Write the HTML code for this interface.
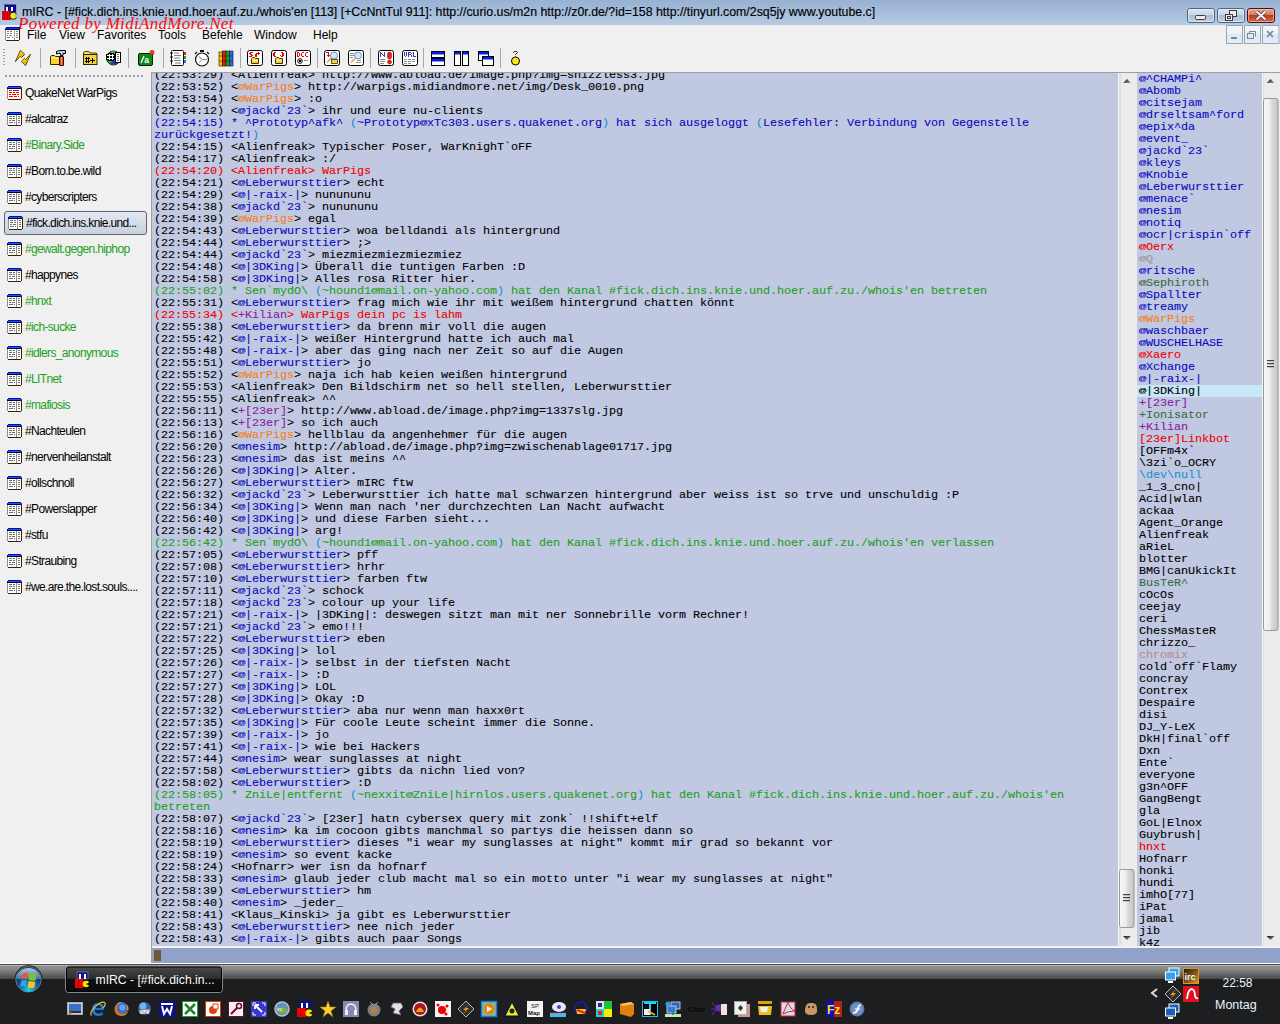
<!DOCTYPE html>
<html><head><meta charset="utf-8">
<style>
*{box-sizing:border-box}
html,body{margin:0;padding:0}
body{width:1280px;height:1024px;position:relative;overflow:hidden;background:#f0f0f0;font-family:"Liberation Sans",sans-serif}
.abs{position:absolute}
#title{left:0;top:0;width:1280px;height:25px;background:linear-gradient(#98b1d2,#b5cbe4)}
#ttext{left:22px;top:5px;font-size:12.33px;color:#000;-webkit-text-stroke-width:0.15px;white-space:nowrap;letter-spacing:0px}
#powered{left:18px;top:14px;font-family:"Liberation Serif",serif;font-style:italic;font-size:17px;color:#ff0808;white-space:nowrap;letter-spacing:0.3px}
.wb{position:absolute;top:8px;height:15px;border:1px solid #4a5a70;border-radius:3px;background:linear-gradient(#d8e6f4 0%,#c4d6ea 45%,#a8c0dc 50%,#b8d0ea 100%)}
#menubar{left:0;top:25px;width:1280px;height:19px}
.menu{position:absolute;top:28px;font-size:12px;color:#000}
.mdi{position:absolute;top:25px;width:17px;height:19px;border:1px solid #98a8b8;background:linear-gradient(#f4f8fc,#dce8f4)}
.tb{position:absolute;top:50px;width:16px;height:16px}
.sep{position:absolute;top:48px;width:1px;height:19px;background:#a8a8a8;border-right:1px solid #fff}
#grip{left:3px;top:49px;width:2px;height:18px;background:repeating-linear-gradient(#999 0 2px,transparent 2px 4px)}
#tgrip{left:5px;top:75px;width:139px;height:2px;background:repeating-linear-gradient(90deg,#a0a0a0 0 2px,transparent 2px 4px)}
.titem{position:absolute;left:7px;height:16px;font-size:12px;letter-spacing:-0.65px;white-space:nowrap;line-height:16px}
.titem svg{position:absolute;left:0;top:0}
.titem span{position:absolute;left:18px;top:-1px}
.tsel{position:absolute;left:4px;width:143px;height:24px;border:1px solid #5c6470;border-radius:3px;background:linear-gradient(#e2e8f0,#c8d2de)}
#chatborder{left:151px;top:72px;width:1129px;height:1px;background:#a0a0a0}
#chatleft{left:151px;top:72px;width:1px;height:891px;background:#a0a0a0}
#chat{left:152px;top:73px;width:966px;height:873px;background:#c1c9e2;overflow:hidden}
#chattext{position:absolute;left:2px;top:-4px;font-family:"Liberation Mono",monospace;font-size:11.8px;letter-spacing:-0.08px;-webkit-text-stroke-width:0.1px;line-height:12px;color:#000}
#chattext div,#nicktext div{white-space:pre;height:12px}
.at{display:inline-block;width:7px;font-weight:normal;text-align:center;transform:scale(1.1,0.66);transform-origin:50% 43%}
#sb1{left:1118px;top:73px;width:19px;height:873px;background:linear-gradient(90deg,#f4f4f4 0,#f4f4f4 1px,#dcdcdc 1px,#ececec 5px,#ececec 100%)}
#nick{left:1137px;top:73px;width:125px;height:873px;background:#c1c9e2;overflow:hidden}
#nicktext{position:absolute;left:2px;top:0px;font-family:"Liberation Mono",monospace;font-size:11.8px;letter-spacing:-0.08px;-webkit-text-stroke-width:0.1px;line-height:12px}
#nicktext .sel{background:#c8e8f8;margin-left:-2px;padding-left:2px;width:125px}
#sb2{left:1262px;top:73px;width:18px;height:873px;background:linear-gradient(90deg,#f4f4f4 0,#e8e8e8 3px,#ececec 100%)}
#inputline{left:152px;top:946px;width:1128px;height:2px;background:#f4f2ee}
#input{left:152px;top:948px;width:1128px;height:15px;background:#91a1ca}
#cursor{left:154px;top:950px;width:7px;height:11px;background:#6e5a34}
#taskbar{left:0;top:963px;width:1280px;height:61px;background:linear-gradient(#ffffff 0,#ffffff 1px,#3c3c3c 1px,#3c3c3c 2px,#a8a8a8 2px,#7c7c7c 15px,#1c1d20 16px,#1c1d20 100%)}
</style></head><body>
<div id="title" class="abs"></div>
<div id="ttext" class="abs">mIRC - [#fick.dich.ins.knie.und.hoer.auf.zu./whois'en [113] [+CcNntTul 911]: http://curio.us/m2n http://z0r.de/?id=158 http://tinyurl.com/2sq5jy www.youtube.c]</div>
<div id="powered" class="abs">Powered by MidiAndMore.Net</div>
<svg class="abs" style="left:0;top:0" width="30" height="44" shape-rendering="crispEdges">
<rect x="4" y="4" width="12" height="8" fill="#0a0a98" stroke="#9a9080" stroke-width="0.6"/>
<rect x="6" y="7" width="2" height="4" fill="#fff"/><rect x="11" y="7" width="2" height="4" fill="#fff"/>
<rect x="2" y="11" width="9" height="9" fill="#f00000"/>
<rect x="4" y="13" width="1" height="6" fill="#b00000"/><rect x="7" y="13" width="1" height="6" fill="#b00000"/>
<g shape-rendering="geometricPrecision"><circle cx="13.3" cy="15.8" r="3.6" fill="#f8f000" stroke="#101010" stroke-width="1"/><path d="M13.3,15.8 L17.5,13.5 L17.5,18 Z" fill="#a8bcd8"/></g>
<!-- menu icon -->
<rect x="6" y="27" width="14" height="1" fill="#0000f0"/><rect x="5" y="28" width="15" height="1" fill="#1840c0"/><rect x="5" y="29" width="15" height="1" fill="#000040"/>
<rect x="5" y="30" width="1" height="10" fill="#909090"/><rect x="19" y="28" width="1" height="12" fill="#402000"/><rect x="6" y="40" width="13" height="1" fill="#402000"/>
<rect x="6" y="30" width="13" height="10" fill="#fff"/><rect x="14" y="30" width="1" height="10" fill="#a0a0a0"/>
<g fill="#808080"><rect x="7" y="31" width="2" height="1"/><rect x="10" y="31" width="2" height="1"/><rect x="16" y="31" width="2" height="1"/><rect x="7" y="33" width="2" height="1"/><rect x="10" y="33" width="2" height="1"/><rect x="16" y="33" width="2" height="1"/><rect x="7" y="35" width="1" height="1"/><rect x="9" y="35" width="3" height="1"/><rect x="16" y="35" width="2" height="1"/><rect x="7" y="37" width="3" height="1"/><rect x="12" y="37" width="1" height="1"/><rect x="16" y="37" width="2" height="1"/></g>
</svg>
<svg class="abs" style="left:1185px;top:6px" width="95" height="40">
<defs>
<linearGradient id="wbg" x1="0" y1="0" x2="0" y2="1"><stop offset="0" stop-color="#dbe7f4"/><stop offset="0.45" stop-color="#c6d6e8"/><stop offset="0.5" stop-color="#a8bfd8"/><stop offset="1" stop-color="#bcd2ea"/></linearGradient>
<linearGradient id="wbc" x1="0" y1="0" x2="0" y2="1"><stop offset="0" stop-color="#eca898"/><stop offset="0.45" stop-color="#dc7a62"/><stop offset="0.5" stop-color="#c23a18"/><stop offset="1" stop-color="#da6a48"/></linearGradient>
<linearGradient id="mdg" x1="0" y1="0" x2="0" y2="1"><stop offset="0" stop-color="#f6f9fc"/><stop offset="0.5" stop-color="#e8f0f8"/><stop offset="0.5" stop-color="#dce8f4"/><stop offset="1" stop-color="#e4eef8"/></linearGradient>
</defs>
<rect x="2.5" y="2.5" width="27" height="14" rx="2.5" fill="url(#wbg)" stroke="#566478"/>
<rect x="3.5" y="3.5" width="25" height="12" rx="1.5" fill="none" stroke="#e8f0f8" stroke-opacity="0.7"/>
<rect x="10.5" y="9.5" width="10" height="4" rx="1" fill="#f0ece8" stroke="#3a3a48"/>
<rect x="32.5" y="2.5" width="27" height="14" rx="2.5" fill="url(#wbg)" stroke="#566478"/>
<rect x="33.5" y="3.5" width="25" height="12" rx="1.5" fill="none" stroke="#e8f0f8" stroke-opacity="0.7"/>
<rect x="44.5" y="4.5" width="7" height="6" fill="#f0ece8" stroke="#3a3a48"/>
<rect x="40.5" y="8.5" width="7" height="6" fill="#f0ece8" stroke="#3a3a48"/>
<rect x="42.5" y="10.5" width="3" height="2" fill="none" stroke="#3a3a48"/>
<rect x="62.5" y="2.5" width="27" height="14" rx="2.5" fill="url(#wbc)" stroke="#4a1010"/>
<rect x="63.5" y="3.5" width="25" height="12" rx="1.5" fill="none" stroke="#f8d0c8" stroke-opacity="0.6"/>
<path d="M71.5,5.5 L80.5,13.5 M80.5,5.5 L71.5,13.5" stroke="#3a3a48" stroke-width="3.4"/>
<path d="M71.5,5.5 L80.5,13.5 M80.5,5.5 L71.5,13.5" stroke="#f4f4f8" stroke-width="2"/>
<!-- mdi -->
<rect x="41.5" y="19.5" width="16" height="18" fill="url(#mdg)" stroke="#98a6b4"/>
<rect x="46" y="31" width="6" height="2" fill="#788898"/>
<rect x="59.5" y="19.5" width="16" height="18" fill="url(#mdg)" stroke="#98a6b4"/>
<path d="M64.5,25.5 h6 v5 M64.5,27.5 v-2" stroke="#788898" fill="none"/><rect x="62.5" y="27.5" width="6" height="5" fill="none" stroke="#788898"/>
<rect x="77.5" y="19.5" width="16.5" height="18" fill="url(#mdg)" stroke="#98a6b4"/>
<path d="M82,25 L88,31 M88,25 L82,31" stroke="#788898" stroke-width="1.6"/>
</svg>


<div class="menu" style="left:27px">File</div>
<div class="menu" style="left:59px">View</div>
<div class="menu" style="left:97px">Favorites</div>
<div class="menu" style="left:158px">Tools</div>
<div class="menu" style="left:202px">Befehle</div>
<div class="menu" style="left:254px">Window</div>
<div class="menu" style="left:313px">Help</div>

<svg class="abs" style="left:0;top:44px" width="530" height="28" viewBox="0 0 530 28" shape-rendering="crispEdges">
<!-- grip -->
<g fill="#a0a0a0"><rect x="3" y="5" width="2" height="1"/><rect x="3" y="8" width="2" height="1"/><rect x="3" y="11" width="2" height="1"/><rect x="3" y="14" width="2" height="1"/><rect x="3" y="17" width="2" height="1"/><rect x="3" y="20" width="2" height="1"/></g>
<g fill="#a8a8a8"><rect x="40" y="4" width="1" height="20"/><rect x="75" y="4" width="1" height="20"/><rect x="128" y="4" width="1" height="20"/><rect x="163" y="4" width="1" height="20"/><rect x="240" y="4" width="1" height="20"/><rect x="317" y="4" width="1" height="20"/><rect x="370" y="4" width="1" height="20"/><rect x="423" y="4" width="1" height="20"/><rect x="500" y="4" width="1" height="20"/></g>
<g shape-rendering="geometricPrecision">
<!-- 1 connect -->
<g transform="translate(15,6)"><defs><linearGradient id="bolt" x1="0" y1="0" x2="1" y2="1"><stop offset="0" stop-color="#fff870"/><stop offset="0.5" stop-color="#f0c800"/><stop offset="1" stop-color="#b08000"/></linearGradient></defs><path d="M0.3,11.7 L5.4,0.3 L9.7,4.3 L6.6,7.5 L5.4,6.3 Z" fill="url(#bolt)" stroke="#584000" stroke-width="0.9" stroke-linejoin="round"/><path d="M15.6,4 L10.6,15.6 L6.3,11.4 L9.5,8.3 L10.6,9.6 Z" fill="url(#bolt)" stroke="#584000" stroke-width="0.9" stroke-linejoin="round"/></g>
<!-- 2 options -->
<g transform="translate(50,6)"><path d="M0.5,6.5 L1.5,5.5 L4.5,5.5 L5.5,6.5 L10.5,6.5 L10.5,14.5 L0.5,14.5 Z" fill="#f4d430" stroke="#302800" stroke-width="1"/><rect x="1" y="7.5" width="9" height="1.2" fill="#f8f0a0"/><rect x="9.5" y="6.5" width="4" height="9" rx="0.5" fill="#e85010" stroke="#200000" stroke-width="1"/><rect x="11" y="7" width="1" height="8" fill="#f89050"/><path d="M6.5,1.5 Q8,0.5 11,0.5 L15.5,0.5 L15.5,3.5 L13,3.5 L13,5.5 L10.5,5.5 L10.5,3.5 Q8,3 6.5,4 Z" fill="#b8d0e8" stroke="#000" stroke-width="1" stroke-linejoin="round"/></g>
<!-- 3 channels folder -->
<g transform="translate(82,6)"><path d="M1.5,4.5 L1.5,2.5 L3,1.5 L7,1.5 L8,3 L14.5,3 L14.5,4.5" fill="#f8e070" stroke="#504000" stroke-width="1"/><rect x="1.5" y="4.5" width="13.5" height="10" fill="#f4d430" stroke="#302800" stroke-width="1"/><g fill="#000" shape-rendering="crispEdges"><rect x="4" y="7" width="1" height="6"/><rect x="6" y="7" width="1" height="6"/><rect x="3" y="8" width="5" height="1"/><rect x="3" y="11" width="5" height="1"/><rect x="10" y="8" width="1" height="5"/><rect x="8" y="10" width="5" height="1"/></g></g>
<!-- 4 globe -->
<g transform="translate(106,6)"><circle cx="7.5" cy="8" r="7" fill="#38a838" stroke="#182818" stroke-width="1"/><path d="M4,14 L7.5,10 L11,14 Z" fill="#1838d8"/><path d="M5,1.5 L7.5,4 L10,1.5Z" fill="#60c060"/>
<g shape-rendering="crispEdges"><rect x="1" y="3" width="8" height="8" fill="#000" opacity="0"/><g fill="#000"><rect x="2" y="3" width="3" height="8"/><rect x="5" y="3" width="3" height="8"/><rect x="0" y="4" width="9" height="3"/><rect x="0" y="7" width="9" height="3"/></g><g fill="#fff"><rect x="3" y="4" width="1" height="6"/><rect x="6" y="4" width="1" height="6"/><rect x="1" y="5" width="7" height="1"/><rect x="1" y="8" width="7" height="1"/></g>
<rect x="9" y="2" width="6" height="11" fill="#000"/><rect x="10" y="3" width="4" height="9" fill="#fff"/><g fill="#808080"><rect x="11" y="4" width="2" height="1"/><rect x="11" y="6" width="2" height="1"/><rect x="11" y="8" width="2" height="1"/><rect x="11" y="10" width="2" height="1"/></g></g></g>
<!-- 5 /a -->
<g transform="translate(138,6)"><rect x="0.5" y="3.5" width="14" height="12" rx="1.5" fill="#0c8a1c" stroke="#002000" stroke-width="1"/><path d="M3,13 L6,6" stroke="#fff" stroke-width="1.3"/><text x="6.3" y="13" font-family="Liberation Sans" font-weight="bold" font-size="8.5" fill="#fff">a</text><rect x="12" y="0.5" width="4" height="4" rx="1" fill="#f04010" stroke="#903000" stroke-width="0.5"/></g>
<!-- 6 address book -->
<g transform="translate(170,6)"><rect x="1.5" y="0.5" width="12" height="15" rx="1" fill="#fff" stroke="#101010" stroke-width="1"/><path d="M4,3h5M4,5.5h7M4,8h6M4,10.5h7M5,13h6" stroke="#707070" stroke-width="0.9"/><rect x="14" y="2" width="2" height="3" fill="#e02020"/><rect x="14" y="6" width="2" height="3" fill="#20a020"/><rect x="14" y="10" width="2" height="3" fill="#2080e0"/><path d="M0,3h3M0,7h3M0,11h3" stroke="#101010" stroke-width="1"/></g>
<!-- 7 timer -->
<g transform="translate(194,6)"><circle cx="8" cy="9.5" r="6.5" fill="#fff" stroke="#101010" stroke-width="1.2"/><rect x="6" y="0" width="4" height="2" fill="#101010"/><path d="M1,4 L3,2 M15,4 L13,2" stroke="#101010" stroke-width="1.2"/><path d="M8,9.5 L5,6.5" stroke="#e02020" stroke-width="1"/><path d="M8,9.5 L13,9.5 M8,9.5 L5,13" stroke="#909090" stroke-width="1"/></g>
<!-- 8 colors -->
<g transform="translate(218,6)"><rect x="1" y="2" width="3.5" height="14" fill="#f0c000" stroke="#302000" stroke-width="0.6"/><rect x="4.5" y="1" width="3.5" height="15" fill="#e02010" stroke="#300000" stroke-width="0.6"/><rect x="8" y="1" width="3.5" height="15" fill="#20a020" stroke="#003000" stroke-width="0.6"/><rect x="11.5" y="1" width="3.5" height="15" fill="#2070e0" stroke="#001040" stroke-width="0.6"/><path d="M1,6h14M1,11h14" stroke="#302000" stroke-width="0.6"/></g>
<!-- 9 send -->
<g transform="translate(247,6)"><rect x="0.5" y="0.5" width="15" height="15" rx="2" fill="#fff" stroke="#000" stroke-width="1"/><g shape-rendering="crispEdges" fill="#f00000"><rect x="3" y="2" width="3" height="1"/><rect x="2" y="3" width="2" height="1"/><rect x="3" y="4" width="2" height="1"/><rect x="4" y="5" width="2" height="1"/><rect x="2" y="6" width="3" height="1"/><rect x="8" y="4" width="2" height="3"/><rect x="9" y="3" width="3" height="1"/><rect x="11" y="2" width="1" height="3"/><rect x="12" y="3" width="1" height="1"/></g><path d="M4.5,9.5 L4.5,8.5 L5.5,7.5 L7.5,7.5 L8.5,8.5 L11.5,8.5 L11.5,13.5 L4.5,13.5 Z" fill="#f4d430" stroke="#403000" stroke-width="1"/><rect x="5" y="10" width="6" height="1" fill="#f8f0a0"/></g>
<!-- 10 chat -->
<g transform="translate(271,6)"><rect x="0.5" y="0.5" width="15" height="15" rx="2" fill="#fff" stroke="#000" stroke-width="1"/><g shape-rendering="crispEdges" fill="#f00000"><rect x="3" y="2" width="2" height="1"/><rect x="2" y="3" width="2" height="3"/><rect x="3" y="6" width="2" height="1"/><rect x="10" y="2" width="2" height="1"/><rect x="11" y="3" width="2" height="3"/><rect x="10" y="6" width="2" height="1"/><rect x="9" y="5" width="1" height="1"/></g><path d="M4.5,9.5 L4.5,8.5 L5.5,7.5 L7.5,7.5 L8.5,8.5 L11.5,8.5 L11.5,13.5 L4.5,13.5 Z" fill="#f4d430" stroke="#403000" stroke-width="1"/><rect x="5" y="10" width="6" height="1" fill="#f8f0a0"/></g>
<!-- 11 DCC -->
<g transform="translate(295,6)"><rect x="0.5" y="0.5" width="15" height="15" rx="2" fill="#fff" stroke="#000" stroke-width="1"/><g shape-rendering="crispEdges" fill="#f00000"><rect x="2" y="2" width="2" height="1"/><rect x="2" y="3" width="1" height="3"/><rect x="4" y="3" width="1" height="3"/><rect x="2" y="6" width="2" height="1"/><rect x="7" y="2" width="2" height="1"/><rect x="6" y="3" width="1" height="3"/><rect x="7" y="6" width="2" height="1"/><rect x="11" y="2" width="2" height="1"/><rect x="10" y="3" width="1" height="3"/><rect x="11" y="6" width="2" height="1"/></g><circle cx="5" cy="11" r="2.3" fill="#fff" stroke="#000" stroke-width="1"/><rect x="4" y="10" width="2" height="2" fill="#000" shape-rendering="crispEdges"/><rect x="9" y="10" width="4" height="1" fill="#909090" shape-rendering="crispEdges"/></g>
<!-- 12 log w/ arrow -->
<g transform="translate(324,6)"><rect x="0.5" y="0.5" width="15" height="15" rx="2" fill="#fff" stroke="#000" stroke-width="1"/><circle cx="10" cy="5.5" r="3.5" fill="#d0e8ff" stroke="#5088c0" stroke-width="0.9"/><path d="M7.5,8 L3,12.5" stroke="#f0a060" stroke-width="1.6"/><rect x="7.5" y="9.5" width="6" height="4" fill="#f4d430" stroke="#403000" stroke-width="0.8"/><g shape-rendering="crispEdges" fill="#f00000"><rect x="2" y="2" width="3" height="1"/><rect x="4" y="3" width="1" height="3"/><rect x="3" y="5" width="3" height="1"/><rect x="4" y="6" width="1" height="1"/></g></g>
<!-- 13 log search -->
<g transform="translate(348,6)"><rect x="0.5" y="0.5" width="15" height="15" rx="2" fill="#fff" stroke="#000" stroke-width="1"/><g shape-rendering="crispEdges" fill="#909090"><rect x="2" y="3" width="4" height="1"/><rect x="2" y="5" width="4" height="1"/><rect x="2" y="7" width="3" height="1"/><rect x="9" y="10" width="4" height="1"/><rect x="8" y="12" width="5" height="1"/></g><circle cx="10" cy="5.5" r="3.5" fill="#d0e8ff" stroke="#5088c0" stroke-width="0.9"/><path d="M7.5,8 L3,12.5" stroke="#f0a060" stroke-width="1.6"/></g>
<!-- 14 N! -->
<g transform="translate(378,6)"><rect x="0.5" y="0.5" width="15" height="15" rx="2" fill="#fff" stroke="#000" stroke-width="1"/><g shape-rendering="crispEdges"><g fill="#3838b8"><rect x="2" y="2" width="1" height="5"/><rect x="6" y="2" width="1" height="5"/><rect x="3" y="3" width="1" height="1"/><rect x="4" y="4" width="1" height="1"/><rect x="5" y="5" width="1" height="1"/></g><g fill="#909090"><rect x="2" y="9" width="5" height="1"/><rect x="2" y="11" width="5" height="1"/><rect x="2" y="13" width="4" height="1"/></g></g><rect x="9.5" y="2" width="4" height="7" rx="2" fill="#f02010" stroke="#a01000" stroke-width="0.6"/><circle cx="11.5" cy="12" r="2" fill="#f02010" stroke="#a01000" stroke-width="0.6"/></g>
<!-- 15 URL -->
<g transform="translate(402,6)"><rect x="0.5" y="0.5" width="15" height="15" rx="2" fill="#fff" stroke="#000" stroke-width="1"/><g shape-rendering="crispEdges"><g fill="#3838b8"><rect x="2" y="2" width="1" height="4"/><rect x="4" y="2" width="1" height="4"/><rect x="3" y="6" width="1" height="1"/><rect x="6" y="2" width="1" height="5"/><rect x="7" y="2" width="2" height="1"/><rect x="9" y="3" width="1" height="1"/><rect x="7" y="4" width="2" height="1"/><rect x="9" y="5" width="1" height="2"/><rect x="11" y="2" width="1" height="5"/><rect x="12" y="6" width="2" height="1"/></g><g fill="#909090"><rect x="2" y="9" width="3" height="1"/><rect x="6" y="9" width="3" height="1"/><rect x="10" y="9" width="3" height="1"/><rect x="2" y="11" width="3" height="1"/><rect x="6" y="11" width="3" height="1"/><rect x="10" y="11" width="3" height="1"/><rect x="2" y="13" width="3" height="1"/><rect x="6" y="13" width="3" height="1"/></g></g></g>
<!-- 16 tile h -->
<g transform="translate(430,6)" shape-rendering="crispEdges"><rect x="1" y="1" width="14" height="7" fill="#000"/><rect x="2" y="2" width="12" height="5" fill="#fff"/><rect x="2" y="2" width="12" height="2" fill="#0020f0"/><rect x="2" y="4" width="12" height="1" fill="#8090f0"/><rect x="1" y="8" width="14" height="8" fill="#000"/><rect x="2" y="9" width="12" height="6" fill="#fff"/><rect x="2" y="9" width="12" height="2" fill="#0020f0"/><rect x="2" y="11" width="12" height="1" fill="#8090f0"/></g>
<!-- 17 tile v -->
<g transform="translate(454,6)" shape-rendering="crispEdges"><rect x="0" y="1" width="7" height="15" fill="#000"/><rect x="1" y="2" width="5" height="13" fill="#fff"/><rect x="1" y="2" width="5" height="2" fill="#0020f0"/><rect x="1" y="4" width="5" height="1" fill="#8090f0"/><rect x="8" y="1" width="7" height="15" fill="#000"/><rect x="9" y="2" width="5" height="13" fill="#fff"/><rect x="9" y="2" width="5" height="2" fill="#0020f0"/><rect x="9" y="4" width="5" height="1" fill="#8090f0"/></g>
<!-- 18 cascade -->
<g transform="translate(478,6)" shape-rendering="crispEdges"><rect x="0" y="1" width="11" height="10" fill="#000"/><rect x="1" y="2" width="9" height="8" fill="#fff"/><rect x="1" y="2" width="9" height="2" fill="#0020f0"/><rect x="1" y="4" width="9" height="1" fill="#8090f0"/><rect x="4" y="6" width="12" height="10" fill="#000"/><rect x="5" y="7" width="10" height="8" fill="#fff"/><rect x="5" y="7" width="10" height="2" fill="#0020f0"/><rect x="5" y="9" width="10" height="1" fill="#8090f0"/></g>
<!-- 19 help -->
<g transform="translate(510,6)"><circle cx="5.5" cy="11" r="4" fill="#f8e818" stroke="#000" stroke-width="1"/><g shape-rendering="crispEdges" fill="#404000"><rect x="4" y="1" width="3" height="1"/><rect x="3" y="2" width="1" height="1"/><rect x="7" y="2" width="1" height="1"/><rect x="6" y="3" width="1" height="1"/><rect x="5" y="4" width="1" height="1"/><rect x="5" y="6" width="1" height="1"/></g></g>
</g>
</svg>


<div id="tgrip" class="abs"></div>
<div class="titem" style="top:86px;color:#000000"><svg width="15" height="14" style="left:0px" shape-rendering="crispEdges"><rect x="1" y="0" width="13" height="2" fill="#0000f0"/><rect x="0" y="1" width="1" height="1" fill="#0000f0"/><rect x="1" y="1" width="13" height="1" fill="#2060c0"/><rect x="0" y="2" width="15" height="1" fill="#000030"/><rect x="0" y="3" width="1" height="10" fill="#909090"/><rect x="14" y="1" width="1" height="12" fill="#402000"/><rect x="1" y="13" width="13" height="1" fill="#402000"/><rect x="1" y="3" width="13" height="10" fill="#ffffff"/><g fill="#ff0000"><rect x="2" y="4" width="3" height="1"/><rect x="6" y="4" width="6" height="1"/><rect x="2" y="6" width="3" height="1"/><rect x="6" y="6" width="2" height="1"/><rect x="9" y="6" width="3" height="1"/><rect x="2" y="8" width="2" height="1"/><rect x="5" y="8" width="4" height="1"/><rect x="10" y="8" width="2" height="1"/><rect x="2" y="10" width="4" height="1"/><rect x="7" y="10" width="3" height="1"/><rect x="11" y="10" width="1" height="1"/></g></svg><span style="left:18px">QuakeNet WarPigs</span></div>
<div class="titem" style="top:112px;color:#000000"><svg width="15" height="14" style="left:0px" shape-rendering="crispEdges"><rect x="1" y="0" width="13" height="2" fill="#0000f0"/><rect x="0" y="1" width="1" height="1" fill="#0000f0"/><rect x="1" y="1" width="13" height="1" fill="#2060c0"/><rect x="0" y="2" width="15" height="1" fill="#000030"/><rect x="0" y="3" width="1" height="10" fill="#909090"/><rect x="14" y="1" width="1" height="12" fill="#402000"/><rect x="1" y="13" width="13" height="1" fill="#402000"/><rect x="1" y="3" width="13" height="10" fill="#ffffff"/><rect x="9" y="3" width="1" height="10" fill="#909090"/><g fill="#707070"><rect x="2" y="4" width="3" height="1"/><rect x="6" y="4" width="2" height="1"/><rect x="2" y="6" width="3" height="1"/><rect x="6" y="6" width="2" height="1"/><rect x="2" y="8" width="2" height="1"/><rect x="5" y="8" width="3" height="1"/><rect x="2" y="10" width="4" height="1"/><rect x="7" y="10" width="1" height="1"/><rect x="11" y="4" width="2" height="1"/><rect x="11" y="6" width="2" height="1"/><rect x="11" y="8" width="2" height="1"/><rect x="11" y="10" width="2" height="1"/></g></svg><span style="left:18px">#alcatraz</span></div>
<div class="titem" style="top:138px;color:#22a01c"><svg width="15" height="14" style="left:0px" shape-rendering="crispEdges"><rect x="1" y="0" width="13" height="2" fill="#0000f0"/><rect x="0" y="1" width="1" height="1" fill="#0000f0"/><rect x="1" y="1" width="13" height="1" fill="#2060c0"/><rect x="0" y="2" width="15" height="1" fill="#000030"/><rect x="0" y="3" width="1" height="10" fill="#909090"/><rect x="14" y="1" width="1" height="12" fill="#402000"/><rect x="1" y="13" width="13" height="1" fill="#402000"/><rect x="1" y="3" width="13" height="10" fill="#ffffff"/><rect x="9" y="3" width="1" height="10" fill="#909090"/><g fill="#707070"><rect x="2" y="4" width="3" height="1"/><rect x="6" y="4" width="2" height="1"/><rect x="2" y="6" width="3" height="1"/><rect x="6" y="6" width="2" height="1"/><rect x="2" y="8" width="2" height="1"/><rect x="5" y="8" width="3" height="1"/><rect x="2" y="10" width="4" height="1"/><rect x="7" y="10" width="1" height="1"/><rect x="11" y="4" width="2" height="1"/><rect x="11" y="6" width="2" height="1"/><rect x="11" y="8" width="2" height="1"/><rect x="11" y="10" width="2" height="1"/></g></svg><span style="left:18px">#Binary.Side</span></div>
<div class="titem" style="top:164px;color:#000000"><svg width="15" height="14" style="left:0px" shape-rendering="crispEdges"><rect x="1" y="0" width="13" height="2" fill="#0000f0"/><rect x="0" y="1" width="1" height="1" fill="#0000f0"/><rect x="1" y="1" width="13" height="1" fill="#2060c0"/><rect x="0" y="2" width="15" height="1" fill="#000030"/><rect x="0" y="3" width="1" height="10" fill="#909090"/><rect x="14" y="1" width="1" height="12" fill="#402000"/><rect x="1" y="13" width="13" height="1" fill="#402000"/><rect x="1" y="3" width="13" height="10" fill="#ffffff"/><rect x="9" y="3" width="1" height="10" fill="#909090"/><g fill="#707070"><rect x="2" y="4" width="3" height="1"/><rect x="6" y="4" width="2" height="1"/><rect x="2" y="6" width="3" height="1"/><rect x="6" y="6" width="2" height="1"/><rect x="2" y="8" width="2" height="1"/><rect x="5" y="8" width="3" height="1"/><rect x="2" y="10" width="4" height="1"/><rect x="7" y="10" width="1" height="1"/><rect x="11" y="4" width="2" height="1"/><rect x="11" y="6" width="2" height="1"/><rect x="11" y="8" width="2" height="1"/><rect x="11" y="10" width="2" height="1"/></g></svg><span style="left:18px">#Born.to.be.wild</span></div>
<div class="titem" style="top:190px;color:#000000"><svg width="15" height="14" style="left:0px" shape-rendering="crispEdges"><rect x="1" y="0" width="13" height="2" fill="#0000f0"/><rect x="0" y="1" width="1" height="1" fill="#0000f0"/><rect x="1" y="1" width="13" height="1" fill="#2060c0"/><rect x="0" y="2" width="15" height="1" fill="#000030"/><rect x="0" y="3" width="1" height="10" fill="#909090"/><rect x="14" y="1" width="1" height="12" fill="#402000"/><rect x="1" y="13" width="13" height="1" fill="#402000"/><rect x="1" y="3" width="13" height="10" fill="#ffffff"/><rect x="9" y="3" width="1" height="10" fill="#909090"/><g fill="#707070"><rect x="2" y="4" width="3" height="1"/><rect x="6" y="4" width="2" height="1"/><rect x="2" y="6" width="3" height="1"/><rect x="6" y="6" width="2" height="1"/><rect x="2" y="8" width="2" height="1"/><rect x="5" y="8" width="3" height="1"/><rect x="2" y="10" width="4" height="1"/><rect x="7" y="10" width="1" height="1"/><rect x="11" y="4" width="2" height="1"/><rect x="11" y="6" width="2" height="1"/><rect x="11" y="8" width="2" height="1"/><rect x="11" y="10" width="2" height="1"/></g></svg><span style="left:18px">#cyberscripters</span></div>
<div class="tsel" style="top:211px"></div>
<div class="titem" style="top:216px;color:#000000"><svg width="15" height="14" style="left:1px" shape-rendering="crispEdges"><rect x="1" y="0" width="13" height="2" fill="#0000f0"/><rect x="0" y="1" width="1" height="1" fill="#0000f0"/><rect x="1" y="1" width="13" height="1" fill="#2060c0"/><rect x="0" y="2" width="15" height="1" fill="#000030"/><rect x="0" y="3" width="1" height="10" fill="#909090"/><rect x="14" y="1" width="1" height="12" fill="#402000"/><rect x="1" y="13" width="13" height="1" fill="#402000"/><rect x="1" y="3" width="13" height="10" fill="#ffffff"/><rect x="9" y="3" width="1" height="10" fill="#909090"/><g fill="#707070"><rect x="2" y="4" width="3" height="1"/><rect x="6" y="4" width="2" height="1"/><rect x="2" y="6" width="3" height="1"/><rect x="6" y="6" width="2" height="1"/><rect x="2" y="8" width="2" height="1"/><rect x="5" y="8" width="3" height="1"/><rect x="2" y="10" width="4" height="1"/><rect x="7" y="10" width="1" height="1"/><rect x="11" y="4" width="2" height="1"/><rect x="11" y="6" width="2" height="1"/><rect x="11" y="8" width="2" height="1"/><rect x="11" y="10" width="2" height="1"/></g></svg><span style="left:19px">#fick.dich.ins.knie.und...</span></div>
<div class="titem" style="top:242px;color:#22a01c"><svg width="15" height="14" style="left:0px" shape-rendering="crispEdges"><rect x="1" y="0" width="13" height="2" fill="#0000f0"/><rect x="0" y="1" width="1" height="1" fill="#0000f0"/><rect x="1" y="1" width="13" height="1" fill="#2060c0"/><rect x="0" y="2" width="15" height="1" fill="#000030"/><rect x="0" y="3" width="1" height="10" fill="#909090"/><rect x="14" y="1" width="1" height="12" fill="#402000"/><rect x="1" y="13" width="13" height="1" fill="#402000"/><rect x="1" y="3" width="13" height="10" fill="#ffffff"/><rect x="9" y="3" width="1" height="10" fill="#909090"/><g fill="#707070"><rect x="2" y="4" width="3" height="1"/><rect x="6" y="4" width="2" height="1"/><rect x="2" y="6" width="3" height="1"/><rect x="6" y="6" width="2" height="1"/><rect x="2" y="8" width="2" height="1"/><rect x="5" y="8" width="3" height="1"/><rect x="2" y="10" width="4" height="1"/><rect x="7" y="10" width="1" height="1"/><rect x="11" y="4" width="2" height="1"/><rect x="11" y="6" width="2" height="1"/><rect x="11" y="8" width="2" height="1"/><rect x="11" y="10" width="2" height="1"/></g></svg><span style="left:18px">#gewalt.gegen.hiphop</span></div>
<div class="titem" style="top:268px;color:#000000"><svg width="15" height="14" style="left:0px" shape-rendering="crispEdges"><rect x="1" y="0" width="13" height="2" fill="#0000f0"/><rect x="0" y="1" width="1" height="1" fill="#0000f0"/><rect x="1" y="1" width="13" height="1" fill="#2060c0"/><rect x="0" y="2" width="15" height="1" fill="#000030"/><rect x="0" y="3" width="1" height="10" fill="#909090"/><rect x="14" y="1" width="1" height="12" fill="#402000"/><rect x="1" y="13" width="13" height="1" fill="#402000"/><rect x="1" y="3" width="13" height="10" fill="#ffffff"/><rect x="9" y="3" width="1" height="10" fill="#909090"/><g fill="#707070"><rect x="2" y="4" width="3" height="1"/><rect x="6" y="4" width="2" height="1"/><rect x="2" y="6" width="3" height="1"/><rect x="6" y="6" width="2" height="1"/><rect x="2" y="8" width="2" height="1"/><rect x="5" y="8" width="3" height="1"/><rect x="2" y="10" width="4" height="1"/><rect x="7" y="10" width="1" height="1"/><rect x="11" y="4" width="2" height="1"/><rect x="11" y="6" width="2" height="1"/><rect x="11" y="8" width="2" height="1"/><rect x="11" y="10" width="2" height="1"/></g></svg><span style="left:18px">#happynes</span></div>
<div class="titem" style="top:294px;color:#22a01c"><svg width="15" height="14" style="left:0px" shape-rendering="crispEdges"><rect x="1" y="0" width="13" height="2" fill="#0000f0"/><rect x="0" y="1" width="1" height="1" fill="#0000f0"/><rect x="1" y="1" width="13" height="1" fill="#2060c0"/><rect x="0" y="2" width="15" height="1" fill="#000030"/><rect x="0" y="3" width="1" height="10" fill="#909090"/><rect x="14" y="1" width="1" height="12" fill="#402000"/><rect x="1" y="13" width="13" height="1" fill="#402000"/><rect x="1" y="3" width="13" height="10" fill="#ffffff"/><rect x="9" y="3" width="1" height="10" fill="#909090"/><g fill="#707070"><rect x="2" y="4" width="3" height="1"/><rect x="6" y="4" width="2" height="1"/><rect x="2" y="6" width="3" height="1"/><rect x="6" y="6" width="2" height="1"/><rect x="2" y="8" width="2" height="1"/><rect x="5" y="8" width="3" height="1"/><rect x="2" y="10" width="4" height="1"/><rect x="7" y="10" width="1" height="1"/><rect x="11" y="4" width="2" height="1"/><rect x="11" y="6" width="2" height="1"/><rect x="11" y="8" width="2" height="1"/><rect x="11" y="10" width="2" height="1"/></g></svg><span style="left:18px">#hnxt</span></div>
<div class="titem" style="top:320px;color:#22a01c"><svg width="15" height="14" style="left:0px" shape-rendering="crispEdges"><rect x="1" y="0" width="13" height="2" fill="#0000f0"/><rect x="0" y="1" width="1" height="1" fill="#0000f0"/><rect x="1" y="1" width="13" height="1" fill="#2060c0"/><rect x="0" y="2" width="15" height="1" fill="#000030"/><rect x="0" y="3" width="1" height="10" fill="#909090"/><rect x="14" y="1" width="1" height="12" fill="#402000"/><rect x="1" y="13" width="13" height="1" fill="#402000"/><rect x="1" y="3" width="13" height="10" fill="#ffffff"/><rect x="9" y="3" width="1" height="10" fill="#909090"/><g fill="#707070"><rect x="2" y="4" width="3" height="1"/><rect x="6" y="4" width="2" height="1"/><rect x="2" y="6" width="3" height="1"/><rect x="6" y="6" width="2" height="1"/><rect x="2" y="8" width="2" height="1"/><rect x="5" y="8" width="3" height="1"/><rect x="2" y="10" width="4" height="1"/><rect x="7" y="10" width="1" height="1"/><rect x="11" y="4" width="2" height="1"/><rect x="11" y="6" width="2" height="1"/><rect x="11" y="8" width="2" height="1"/><rect x="11" y="10" width="2" height="1"/></g></svg><span style="left:18px">#ich-sucke</span></div>
<div class="titem" style="top:346px;color:#22a01c"><svg width="15" height="14" style="left:0px" shape-rendering="crispEdges"><rect x="1" y="0" width="13" height="2" fill="#0000f0"/><rect x="0" y="1" width="1" height="1" fill="#0000f0"/><rect x="1" y="1" width="13" height="1" fill="#2060c0"/><rect x="0" y="2" width="15" height="1" fill="#000030"/><rect x="0" y="3" width="1" height="10" fill="#909090"/><rect x="14" y="1" width="1" height="12" fill="#402000"/><rect x="1" y="13" width="13" height="1" fill="#402000"/><rect x="1" y="3" width="13" height="10" fill="#ffffff"/><rect x="9" y="3" width="1" height="10" fill="#909090"/><g fill="#707070"><rect x="2" y="4" width="3" height="1"/><rect x="6" y="4" width="2" height="1"/><rect x="2" y="6" width="3" height="1"/><rect x="6" y="6" width="2" height="1"/><rect x="2" y="8" width="2" height="1"/><rect x="5" y="8" width="3" height="1"/><rect x="2" y="10" width="4" height="1"/><rect x="7" y="10" width="1" height="1"/><rect x="11" y="4" width="2" height="1"/><rect x="11" y="6" width="2" height="1"/><rect x="11" y="8" width="2" height="1"/><rect x="11" y="10" width="2" height="1"/></g></svg><span style="left:18px">#idlers_anonymous</span></div>
<div class="titem" style="top:372px;color:#22a01c"><svg width="15" height="14" style="left:0px" shape-rendering="crispEdges"><rect x="1" y="0" width="13" height="2" fill="#0000f0"/><rect x="0" y="1" width="1" height="1" fill="#0000f0"/><rect x="1" y="1" width="13" height="1" fill="#2060c0"/><rect x="0" y="2" width="15" height="1" fill="#000030"/><rect x="0" y="3" width="1" height="10" fill="#909090"/><rect x="14" y="1" width="1" height="12" fill="#402000"/><rect x="1" y="13" width="13" height="1" fill="#402000"/><rect x="1" y="3" width="13" height="10" fill="#ffffff"/><rect x="9" y="3" width="1" height="10" fill="#909090"/><g fill="#707070"><rect x="2" y="4" width="3" height="1"/><rect x="6" y="4" width="2" height="1"/><rect x="2" y="6" width="3" height="1"/><rect x="6" y="6" width="2" height="1"/><rect x="2" y="8" width="2" height="1"/><rect x="5" y="8" width="3" height="1"/><rect x="2" y="10" width="4" height="1"/><rect x="7" y="10" width="1" height="1"/><rect x="11" y="4" width="2" height="1"/><rect x="11" y="6" width="2" height="1"/><rect x="11" y="8" width="2" height="1"/><rect x="11" y="10" width="2" height="1"/></g></svg><span style="left:18px">#LITnet</span></div>
<div class="titem" style="top:398px;color:#22a01c"><svg width="15" height="14" style="left:0px" shape-rendering="crispEdges"><rect x="1" y="0" width="13" height="2" fill="#0000f0"/><rect x="0" y="1" width="1" height="1" fill="#0000f0"/><rect x="1" y="1" width="13" height="1" fill="#2060c0"/><rect x="0" y="2" width="15" height="1" fill="#000030"/><rect x="0" y="3" width="1" height="10" fill="#909090"/><rect x="14" y="1" width="1" height="12" fill="#402000"/><rect x="1" y="13" width="13" height="1" fill="#402000"/><rect x="1" y="3" width="13" height="10" fill="#ffffff"/><rect x="9" y="3" width="1" height="10" fill="#909090"/><g fill="#707070"><rect x="2" y="4" width="3" height="1"/><rect x="6" y="4" width="2" height="1"/><rect x="2" y="6" width="3" height="1"/><rect x="6" y="6" width="2" height="1"/><rect x="2" y="8" width="2" height="1"/><rect x="5" y="8" width="3" height="1"/><rect x="2" y="10" width="4" height="1"/><rect x="7" y="10" width="1" height="1"/><rect x="11" y="4" width="2" height="1"/><rect x="11" y="6" width="2" height="1"/><rect x="11" y="8" width="2" height="1"/><rect x="11" y="10" width="2" height="1"/></g></svg><span style="left:18px">#mafiosis</span></div>
<div class="titem" style="top:424px;color:#000000"><svg width="15" height="14" style="left:0px" shape-rendering="crispEdges"><rect x="1" y="0" width="13" height="2" fill="#0000f0"/><rect x="0" y="1" width="1" height="1" fill="#0000f0"/><rect x="1" y="1" width="13" height="1" fill="#2060c0"/><rect x="0" y="2" width="15" height="1" fill="#000030"/><rect x="0" y="3" width="1" height="10" fill="#909090"/><rect x="14" y="1" width="1" height="12" fill="#402000"/><rect x="1" y="13" width="13" height="1" fill="#402000"/><rect x="1" y="3" width="13" height="10" fill="#ffffff"/><rect x="9" y="3" width="1" height="10" fill="#909090"/><g fill="#707070"><rect x="2" y="4" width="3" height="1"/><rect x="6" y="4" width="2" height="1"/><rect x="2" y="6" width="3" height="1"/><rect x="6" y="6" width="2" height="1"/><rect x="2" y="8" width="2" height="1"/><rect x="5" y="8" width="3" height="1"/><rect x="2" y="10" width="4" height="1"/><rect x="7" y="10" width="1" height="1"/><rect x="11" y="4" width="2" height="1"/><rect x="11" y="6" width="2" height="1"/><rect x="11" y="8" width="2" height="1"/><rect x="11" y="10" width="2" height="1"/></g></svg><span style="left:18px">#Nachteulen</span></div>
<div class="titem" style="top:450px;color:#000000"><svg width="15" height="14" style="left:0px" shape-rendering="crispEdges"><rect x="1" y="0" width="13" height="2" fill="#0000f0"/><rect x="0" y="1" width="1" height="1" fill="#0000f0"/><rect x="1" y="1" width="13" height="1" fill="#2060c0"/><rect x="0" y="2" width="15" height="1" fill="#000030"/><rect x="0" y="3" width="1" height="10" fill="#909090"/><rect x="14" y="1" width="1" height="12" fill="#402000"/><rect x="1" y="13" width="13" height="1" fill="#402000"/><rect x="1" y="3" width="13" height="10" fill="#ffffff"/><rect x="9" y="3" width="1" height="10" fill="#909090"/><g fill="#707070"><rect x="2" y="4" width="3" height="1"/><rect x="6" y="4" width="2" height="1"/><rect x="2" y="6" width="3" height="1"/><rect x="6" y="6" width="2" height="1"/><rect x="2" y="8" width="2" height="1"/><rect x="5" y="8" width="3" height="1"/><rect x="2" y="10" width="4" height="1"/><rect x="7" y="10" width="1" height="1"/><rect x="11" y="4" width="2" height="1"/><rect x="11" y="6" width="2" height="1"/><rect x="11" y="8" width="2" height="1"/><rect x="11" y="10" width="2" height="1"/></g></svg><span style="left:18px">#nervenheilanstalt</span></div>
<div class="titem" style="top:476px;color:#000000"><svg width="15" height="14" style="left:0px" shape-rendering="crispEdges"><rect x="1" y="0" width="13" height="2" fill="#0000f0"/><rect x="0" y="1" width="1" height="1" fill="#0000f0"/><rect x="1" y="1" width="13" height="1" fill="#2060c0"/><rect x="0" y="2" width="15" height="1" fill="#000030"/><rect x="0" y="3" width="1" height="10" fill="#909090"/><rect x="14" y="1" width="1" height="12" fill="#402000"/><rect x="1" y="13" width="13" height="1" fill="#402000"/><rect x="1" y="3" width="13" height="10" fill="#ffffff"/><rect x="9" y="3" width="1" height="10" fill="#909090"/><g fill="#707070"><rect x="2" y="4" width="3" height="1"/><rect x="6" y="4" width="2" height="1"/><rect x="2" y="6" width="3" height="1"/><rect x="6" y="6" width="2" height="1"/><rect x="2" y="8" width="2" height="1"/><rect x="5" y="8" width="3" height="1"/><rect x="2" y="10" width="4" height="1"/><rect x="7" y="10" width="1" height="1"/><rect x="11" y="4" width="2" height="1"/><rect x="11" y="6" width="2" height="1"/><rect x="11" y="8" width="2" height="1"/><rect x="11" y="10" width="2" height="1"/></g></svg><span style="left:18px">#ollschnoll</span></div>
<div class="titem" style="top:502px;color:#000000"><svg width="15" height="14" style="left:0px" shape-rendering="crispEdges"><rect x="1" y="0" width="13" height="2" fill="#0000f0"/><rect x="0" y="1" width="1" height="1" fill="#0000f0"/><rect x="1" y="1" width="13" height="1" fill="#2060c0"/><rect x="0" y="2" width="15" height="1" fill="#000030"/><rect x="0" y="3" width="1" height="10" fill="#909090"/><rect x="14" y="1" width="1" height="12" fill="#402000"/><rect x="1" y="13" width="13" height="1" fill="#402000"/><rect x="1" y="3" width="13" height="10" fill="#ffffff"/><rect x="9" y="3" width="1" height="10" fill="#909090"/><g fill="#707070"><rect x="2" y="4" width="3" height="1"/><rect x="6" y="4" width="2" height="1"/><rect x="2" y="6" width="3" height="1"/><rect x="6" y="6" width="2" height="1"/><rect x="2" y="8" width="2" height="1"/><rect x="5" y="8" width="3" height="1"/><rect x="2" y="10" width="4" height="1"/><rect x="7" y="10" width="1" height="1"/><rect x="11" y="4" width="2" height="1"/><rect x="11" y="6" width="2" height="1"/><rect x="11" y="8" width="2" height="1"/><rect x="11" y="10" width="2" height="1"/></g></svg><span style="left:18px">#Powerslapper</span></div>
<div class="titem" style="top:528px;color:#000000"><svg width="15" height="14" style="left:0px" shape-rendering="crispEdges"><rect x="1" y="0" width="13" height="2" fill="#0000f0"/><rect x="0" y="1" width="1" height="1" fill="#0000f0"/><rect x="1" y="1" width="13" height="1" fill="#2060c0"/><rect x="0" y="2" width="15" height="1" fill="#000030"/><rect x="0" y="3" width="1" height="10" fill="#909090"/><rect x="14" y="1" width="1" height="12" fill="#402000"/><rect x="1" y="13" width="13" height="1" fill="#402000"/><rect x="1" y="3" width="13" height="10" fill="#ffffff"/><rect x="9" y="3" width="1" height="10" fill="#909090"/><g fill="#707070"><rect x="2" y="4" width="3" height="1"/><rect x="6" y="4" width="2" height="1"/><rect x="2" y="6" width="3" height="1"/><rect x="6" y="6" width="2" height="1"/><rect x="2" y="8" width="2" height="1"/><rect x="5" y="8" width="3" height="1"/><rect x="2" y="10" width="4" height="1"/><rect x="7" y="10" width="1" height="1"/><rect x="11" y="4" width="2" height="1"/><rect x="11" y="6" width="2" height="1"/><rect x="11" y="8" width="2" height="1"/><rect x="11" y="10" width="2" height="1"/></g></svg><span style="left:18px">#stfu</span></div>
<div class="titem" style="top:554px;color:#000000"><svg width="15" height="14" style="left:0px" shape-rendering="crispEdges"><rect x="1" y="0" width="13" height="2" fill="#0000f0"/><rect x="0" y="1" width="1" height="1" fill="#0000f0"/><rect x="1" y="1" width="13" height="1" fill="#2060c0"/><rect x="0" y="2" width="15" height="1" fill="#000030"/><rect x="0" y="3" width="1" height="10" fill="#909090"/><rect x="14" y="1" width="1" height="12" fill="#402000"/><rect x="1" y="13" width="13" height="1" fill="#402000"/><rect x="1" y="3" width="13" height="10" fill="#ffffff"/><rect x="9" y="3" width="1" height="10" fill="#909090"/><g fill="#707070"><rect x="2" y="4" width="3" height="1"/><rect x="6" y="4" width="2" height="1"/><rect x="2" y="6" width="3" height="1"/><rect x="6" y="6" width="2" height="1"/><rect x="2" y="8" width="2" height="1"/><rect x="5" y="8" width="3" height="1"/><rect x="2" y="10" width="4" height="1"/><rect x="7" y="10" width="1" height="1"/><rect x="11" y="4" width="2" height="1"/><rect x="11" y="6" width="2" height="1"/><rect x="11" y="8" width="2" height="1"/><rect x="11" y="10" width="2" height="1"/></g></svg><span style="left:18px">#Straubing</span></div>
<div class="titem" style="top:580px;color:#000000"><svg width="15" height="14" style="left:0px" shape-rendering="crispEdges"><rect x="1" y="0" width="13" height="2" fill="#0000f0"/><rect x="0" y="1" width="1" height="1" fill="#0000f0"/><rect x="1" y="1" width="13" height="1" fill="#2060c0"/><rect x="0" y="2" width="15" height="1" fill="#000030"/><rect x="0" y="3" width="1" height="10" fill="#909090"/><rect x="14" y="1" width="1" height="12" fill="#402000"/><rect x="1" y="13" width="13" height="1" fill="#402000"/><rect x="1" y="3" width="13" height="10" fill="#ffffff"/><rect x="9" y="3" width="1" height="10" fill="#909090"/><g fill="#707070"><rect x="2" y="4" width="3" height="1"/><rect x="6" y="4" width="2" height="1"/><rect x="2" y="6" width="3" height="1"/><rect x="6" y="6" width="2" height="1"/><rect x="2" y="8" width="2" height="1"/><rect x="5" y="8" width="3" height="1"/><rect x="2" y="10" width="4" height="1"/><rect x="7" y="10" width="1" height="1"/><rect x="11" y="4" width="2" height="1"/><rect x="11" y="6" width="2" height="1"/><rect x="11" y="8" width="2" height="1"/><rect x="11" y="10" width="2" height="1"/></g></svg><span style="left:18px">#we.are.the.lost.souls....</span></div>

<div id="chatborder" class="abs"></div>
<div id="chatleft" class="abs"></div>
<div id="chat" class="abs"><div id="chattext">
<div>(22:53:29) &lt;Alienfreak&gt; http://www.abload.de/image.php?img=shizzless3.jpg</div>
<div>(22:53:52) &lt;<span style="color:#f47f20"><b class="at">@</b>WarPigs</span>&gt; http://warpigs.midiandmore.net/img/Desk_0010.png</div>
<div>(22:53:54) &lt;<span style="color:#f47f20"><b class="at">@</b>WarPigs</span>&gt; :o</div>
<div>(22:54:12) &lt;<span style="color:#0a0abc"><b class="at">@</b>jackd`23`</span>&gt; ihr und eure nu-clients</div>
<div><span style="color:#0a0abc">(22:54:15) * ^Prototyp^afk^ </span><span style="color:#1c90d0">(</span><span style="color:#0a0abc">~Prototyp<b class="at">@</b>xTc303.users.quakenet.org</span><span style="color:#1c90d0">)</span><span style="color:#0a0abc"> hat sich ausgeloggt </span><span style="color:#1c90d0">(</span><span style="color:#0a0abc">Lesefehler: Verbindung von Gegenstelle</span></div>
<div><span style="color:#0a0abc">zurückgesetzt!</span><span style="color:#1c90d0">)</span></div>
<div>(22:54:15) &lt;Alienfreak&gt; Typischer Poser, WarKnighT`oFF</div>
<div>(22:54:17) &lt;Alienfreak&gt; :/</div>
<div><span style="color:#f00000">(22:54:20) &lt;Alienfreak&gt; WarPigs</span></div>
<div>(22:54:21) &lt;<span style="color:#0a0abc"><b class="at">@</b>Leberwursttier</span>&gt; echt</div>
<div>(22:54:29) &lt;<span style="color:#0a0abc"><b class="at">@</b>|-raix-|</span>&gt; nunununu</div>
<div>(22:54:38) &lt;<span style="color:#0a0abc"><b class="at">@</b>jackd`23`</span>&gt; nunununu</div>
<div>(22:54:39) &lt;<span style="color:#f47f20"><b class="at">@</b>WarPigs</span>&gt; egal</div>
<div>(22:54:43) &lt;<span style="color:#0a0abc"><b class="at">@</b>Leberwursttier</span>&gt; woa belldandi als hintergrund</div>
<div>(22:54:44) &lt;<span style="color:#0a0abc"><b class="at">@</b>Leberwursttier</span>&gt; ;&gt;</div>
<div>(22:54:44) &lt;<span style="color:#0a0abc"><b class="at">@</b>jackd`23`</span>&gt; miezmiezmiezmiezmiez</div>
<div>(22:54:48) &lt;<span style="color:#0a0abc"><b class="at">@</b>|3DKing|</span>&gt; Überall die tuntigen Farben :D</div>
<div>(22:54:58) &lt;<span style="color:#0a0abc"><b class="at">@</b>|3DKing|</span>&gt; Alles rosa Ritter hier.</div>
<div><span style="color:#22a01c">(22:55:02) * Sen`mydO\ </span><span style="color:#1c90d0">(</span><span style="color:#22a01c">~hound1<b class="at">@</b>mail.on-yahoo.com</span><span style="color:#1c90d0">)</span><span style="color:#22a01c"> hat den Kanal #fick.dich.ins.knie.und.hoer.auf.zu./whois'en betreten</span></div>
<div>(22:55:31) &lt;<span style="color:#0a0abc"><b class="at">@</b>Leberwursttier</span>&gt; frag mich wie ihr mit weißem hintergrund chatten könnt</div>
<div><span style="color:#f00000">(22:55:34) &lt;</span><span style="color:#8c1c9c">+Kilian</span><span style="color:#f00000">&gt; WarPigs dein pc is lahm</span></div>
<div>(22:55:38) &lt;<span style="color:#0a0abc"><b class="at">@</b>Leberwursttier</span>&gt; da brenn mir voll die augen</div>
<div>(22:55:42) &lt;<span style="color:#0a0abc"><b class="at">@</b>|-raix-|</span>&gt; weißer Hintergrund hatte ich auch mal</div>
<div>(22:55:48) &lt;<span style="color:#0a0abc"><b class="at">@</b>|-raix-|</span>&gt; aber das ging nach ner Zeit so auf die Augen</div>
<div>(22:55:51) &lt;<span style="color:#0a0abc"><b class="at">@</b>Leberwursttier</span>&gt; jo</div>
<div>(22:55:52) &lt;<span style="color:#f47f20"><b class="at">@</b>WarPigs</span>&gt; naja ich hab keien weißen hintergrund</div>
<div>(22:55:53) &lt;Alienfreak&gt; Den Bildschirm net so hell stellen, Leberwursttier</div>
<div>(22:55:55) &lt;Alienfreak&gt; ^^</div>
<div>(22:56:11) &lt;<span style="color:#8c1c9c">+[23er]</span>&gt; http://www.abload.de/image.php?img=1337slg.jpg</div>
<div>(22:56:13) &lt;<span style="color:#8c1c9c">+[23er]</span>&gt; so ich auch</div>
<div>(22:56:16) &lt;<span style="color:#f47f20"><b class="at">@</b>WarPigs</span>&gt; hellblau da angenhehmer für die augen</div>
<div>(22:56:20) &lt;<span style="color:#0a0abc"><b class="at">@</b>nesim</span>&gt; http://abload.de/image.php?img=zwischenablage01717.jpg</div>
<div>(22:56:23) &lt;<span style="color:#0a0abc"><b class="at">@</b>nesim</span>&gt; das ist meins ^^</div>
<div>(22:56:26) &lt;<span style="color:#0a0abc"><b class="at">@</b>|3DKing|</span>&gt; Alter.</div>
<div>(22:56:27) &lt;<span style="color:#0a0abc"><b class="at">@</b>Leberwursttier</span>&gt; mIRC ftw</div>
<div>(22:56:32) &lt;<span style="color:#0a0abc"><b class="at">@</b>jackd`23`</span>&gt; Leberwursttier ich hatte mal schwarzen hintergrund aber weiss ist so trve und unschuldig :P</div>
<div>(22:56:34) &lt;<span style="color:#0a0abc"><b class="at">@</b>|3DKing|</span>&gt; Wenn man nach 'ner durchzechten Lan Nacht aufwacht</div>
<div>(22:56:40) &lt;<span style="color:#0a0abc"><b class="at">@</b>|3DKing|</span>&gt; und diese Farben sieht...</div>
<div>(22:56:42) &lt;<span style="color:#0a0abc"><b class="at">@</b>|3DKing|</span>&gt; arg!</div>
<div><span style="color:#22a01c">(22:56:42) * Sen`mydO\ </span><span style="color:#1c90d0">(</span><span style="color:#22a01c">~hound1<b class="at">@</b>mail.on-yahoo.com</span><span style="color:#1c90d0">)</span><span style="color:#22a01c"> hat den Kanal #fick.dich.ins.knie.und.hoer.auf.zu./whois'en verlassen</span></div>
<div>(22:57:05) &lt;<span style="color:#0a0abc"><b class="at">@</b>Leberwursttier</span>&gt; pff</div>
<div>(22:57:08) &lt;<span style="color:#0a0abc"><b class="at">@</b>Leberwursttier</span>&gt; hrhr</div>
<div>(22:57:10) &lt;<span style="color:#0a0abc"><b class="at">@</b>Leberwursttier</span>&gt; farben ftw</div>
<div>(22:57:11) &lt;<span style="color:#0a0abc"><b class="at">@</b>jackd`23`</span>&gt; schock</div>
<div>(22:57:18) &lt;<span style="color:#0a0abc"><b class="at">@</b>jackd`23`</span>&gt; colour up your life</div>
<div>(22:57:21) &lt;<span style="color:#0a0abc"><b class="at">@</b>|-raix-|</span>&gt; |3DKing|: deswegen sitzt man mit ner Sonnebrille vorm Rechner!</div>
<div>(22:57:21) &lt;<span style="color:#0a0abc"><b class="at">@</b>jackd`23`</span>&gt; emo!!!</div>
<div>(22:57:22) &lt;<span style="color:#0a0abc"><b class="at">@</b>Leberwursttier</span>&gt; eben</div>
<div>(22:57:25) &lt;<span style="color:#0a0abc"><b class="at">@</b>|3DKing|</span>&gt; lol</div>
<div>(22:57:26) &lt;<span style="color:#0a0abc"><b class="at">@</b>|-raix-|</span>&gt; selbst in der tiefsten Nacht</div>
<div>(22:57:27) &lt;<span style="color:#0a0abc"><b class="at">@</b>|-raix-|</span>&gt; :D</div>
<div>(22:57:27) &lt;<span style="color:#0a0abc"><b class="at">@</b>|3DKing|</span>&gt; LOL</div>
<div>(22:57:28) &lt;<span style="color:#0a0abc"><b class="at">@</b>|3DKing|</span>&gt; Okay :D</div>
<div>(22:57:32) &lt;<span style="color:#0a0abc"><b class="at">@</b>Leberwursttier</span>&gt; aba nur wenn man haxx0rt</div>
<div>(22:57:35) &lt;<span style="color:#0a0abc"><b class="at">@</b>|3DKing|</span>&gt; Für coole Leute scheint immer die Sonne.</div>
<div>(22:57:39) &lt;<span style="color:#0a0abc"><b class="at">@</b>|-raix-|</span>&gt; jo</div>
<div>(22:57:41) &lt;<span style="color:#0a0abc"><b class="at">@</b>|-raix-|</span>&gt; wie bei Hackers</div>
<div>(22:57:44) &lt;<span style="color:#0a0abc"><b class="at">@</b>nesim</span>&gt; wear sunglasses at night</div>
<div>(22:57:58) &lt;<span style="color:#0a0abc"><b class="at">@</b>Leberwursttier</span>&gt; gibts da nichn lied von?</div>
<div>(22:58:02) &lt;<span style="color:#0a0abc"><b class="at">@</b>Leberwursttier</span>&gt; :D</div>
<div><span style="color:#22a01c">(22:58:05) * ZniLe|entfernt </span><span style="color:#1c90d0">(</span><span style="color:#22a01c">~nexxit<b class="at">@</b>ZniLe|hirnlos.users.quakenet.org</span><span style="color:#1c90d0">)</span><span style="color:#22a01c"> hat den Kanal #fick.dich.ins.knie.und.hoer.auf.zu./whois'en</span></div>
<div><span style="color:#22a01c">betreten</span></div>
<div>(22:58:07) &lt;<span style="color:#0a0abc"><b class="at">@</b>jackd`23`</span>&gt; [23er] hatn cybersex query mit zonk` !!shift+elf</div>
<div>(22:58:16) &lt;<span style="color:#0a0abc"><b class="at">@</b>nesim</span>&gt; ka im cocoon gibts manchmal so partys die heissen dann so</div>
<div>(22:58:19) &lt;<span style="color:#0a0abc"><b class="at">@</b>Leberwursttier</span>&gt; dieses "i wear my sunglasses at night" kommt mir grad so bekannt vor</div>
<div>(22:58:19) &lt;<span style="color:#0a0abc"><b class="at">@</b>nesim</span>&gt; so event kacke</div>
<div>(22:58:24) &lt;Hofnarr&gt; wer isn da hofnarf</div>
<div>(22:58:33) &lt;<span style="color:#0a0abc"><b class="at">@</b>nesim</span>&gt; glaub jeder club macht mal so ein motto unter "i wear my sunglasses at night"</div>
<div>(22:58:39) &lt;<span style="color:#0a0abc"><b class="at">@</b>Leberwursttier</span>&gt; hm</div>
<div>(22:58:40) &lt;<span style="color:#0a0abc"><b class="at">@</b>nesim</span>&gt; _jeder_</div>
<div>(22:58:41) &lt;Klaus_Kinski&gt; ja gibt es Leberwursttier</div>
<div>(22:58:43) &lt;<span style="color:#0a0abc"><b class="at">@</b>Leberwursttier</span>&gt; nee nich jeder</div>
<div>(22:58:43) &lt;<span style="color:#0a0abc"><b class="at">@</b>|-raix-|</span>&gt; gibts auch paar Songs</div>
</div></div>
<svg class="abs" style="left:1118px;top:73px" width="19" height="873">
<defs><linearGradient id="thm" x1="0" y1="0" x2="1" y2="0"><stop offset="0" stop-color="#f8f8f8"/><stop offset="0.45" stop-color="#ececec"/><stop offset="0.55" stop-color="#dcdcdc"/><stop offset="1" stop-color="#c4c4c8"/></linearGradient>
<linearGradient id="arr" x1="0" y1="0" x2="1" y2="1"><stop offset="0" stop-color="#101010"/><stop offset="1" stop-color="#a0a0a0"/></linearGradient></defs>
<rect x="0" y="0" width="1" height="873" fill="#f8f8f8"/>
<rect x="1" y="0" width="18" height="873" fill="#ececec"/>
<rect x="1" y="0" width="2" height="873" fill="#dedede"/>
<path d="M5,10 L9,6 L13,10 Z" fill="url(#arr)"/>
<path d="M5,863 L9,867 L13,863 Z" fill="url(#arr)"/>
<rect x="1.5" y="796.5" width="14.5" height="58" rx="2" fill="url(#thm)" stroke="#989898"/>
<g fill="#404040"><rect x="5" y="821" width="7" height="1.2"/><rect x="5" y="824" width="7" height="1.2"/><rect x="5" y="827" width="7" height="1.2"/></g>
</svg>
<svg class="abs" style="left:1262px;top:73px" width="18" height="873">
<rect x="0" y="0" width="1" height="873" fill="#f8f8f8"/>
<rect x="1" y="0" width="17" height="873" fill="#ececec"/>
<rect x="1" y="0" width="1" height="873" fill="#dedede"/>
<path d="M4.5,10 L8.5,6 L12.5,10 Z" fill="url(#arr)"/>
<path d="M4.5,863 L8.5,867 L12.5,863 Z" fill="url(#arr)"/>
<rect x="1.5" y="25.5" width="14.5" height="532" rx="2" fill="url(#thm)" stroke="#989898"/>
<g fill="#404040"><rect x="5" y="287" width="7" height="1.2"/><rect x="5" y="290" width="7" height="1.2"/><rect x="5" y="293" width="7" height="1.2"/></g>
</svg>

<div id="nick" class="abs"><div id="nicktext">
<div style="color:#0a0abc"><b class="at">@</b>^CHAMPi^</div>
<div style="color:#0a0abc"><b class="at">@</b>Abomb</div>
<div style="color:#0a0abc"><b class="at">@</b>citsejam</div>
<div style="color:#0a0abc"><b class="at">@</b>drseltsam^ford</div>
<div style="color:#0a0abc"><b class="at">@</b>epix^da</div>
<div style="color:#0a0abc"><b class="at">@</b>event_</div>
<div style="color:#0a0abc"><b class="at">@</b>jackd`23`</div>
<div style="color:#0a0abc"><b class="at">@</b>kleys</div>
<div style="color:#0a0abc"><b class="at">@</b>Knobie</div>
<div style="color:#0a0abc"><b class="at">@</b>Leberwursttier</div>
<div style="color:#0a0abc"><b class="at">@</b>menace`</div>
<div style="color:#0a0abc"><b class="at">@</b>nesim</div>
<div style="color:#0a0abc"><b class="at">@</b>notiq</div>
<div style="color:#0a0abc"><b class="at">@</b>ocr|crispin`off</div>
<div style="color:#f00000"><b class="at">@</b>Oerx</div>
<div style="color:#9a9a9a"><b class="at">@</b>Q</div>
<div style="color:#0a0abc"><b class="at">@</b>ritsche</div>
<div style="color:#386c3c"><b class="at">@</b>Sephiroth</div>
<div style="color:#0a0abc"><b class="at">@</b>Spallter</div>
<div style="color:#0a0abc"><b class="at">@</b>treamy</div>
<div style="color:#f47f20"><b class="at">@</b>WarPigs</div>
<div style="color:#0a0abc"><b class="at">@</b>waschbaer</div>
<div style="color:#0a0abc"><b class="at">@</b>WUSCHELHASE</div>
<div style="color:#f00000"><b class="at">@</b>Xaero</div>
<div style="color:#0a0abc"><b class="at">@</b>Xchange</div>
<div style="color:#0a0abc"><b class="at">@</b>|-raix-|</div>
<div class="sel" style="color:#000000"><b class="at">@</b>|3DKing|</div>
<div style="color:#8c1c9c">+[23er]</div>
<div style="color:#386c3c">+Ionisator</div>
<div style="color:#8c1c9c">+Kilian</div>
<div style="color:#f00000">[23er]Linkbot</div>
<div style="color:#000000">[OFFm4x`</div>
<div style="color:#000000">\3zi`o_OCRY</div>
<div style="color:#1c90d0">\dev\null</div>
<div style="color:#000000">_1_3_cno|</div>
<div style="color:#000000">Acid|wlan</div>
<div style="color:#000000">ackaa</div>
<div style="color:#000000">Agent_Orange</div>
<div style="color:#000000">Alienfreak</div>
<div style="color:#000000">aRieL</div>
<div style="color:#000000">blotter</div>
<div style="color:#000000">BMG|canUkickIt</div>
<div style="color:#386c3c">BusTeR^</div>
<div style="color:#000000">cOcOs</div>
<div style="color:#000000">ceejay</div>
<div style="color:#000000">ceri</div>
<div style="color:#000000">ChessMasteR</div>
<div style="color:#000000">chrizzo_</div>
<div style="color:#bc8a8a">chromix</div>
<div style="color:#000000">cold`off`Flamy</div>
<div style="color:#000000">concray</div>
<div style="color:#000000">Contrex</div>
<div style="color:#000000">Despaire</div>
<div style="color:#000000">disi</div>
<div style="color:#000000">DJ_Y-LeX</div>
<div style="color:#000000">DkH|final`off</div>
<div style="color:#000000">Dxn</div>
<div style="color:#000000">Ente`</div>
<div style="color:#000000">everyone</div>
<div style="color:#000000">g3n^OFF</div>
<div style="color:#000000">GangBengt</div>
<div style="color:#000000">gla</div>
<div style="color:#000000">GoL|Elnox</div>
<div style="color:#000000">Guybrush|</div>
<div style="color:#f00000">hnxt</div>
<div style="color:#000000">Hofnarr</div>
<div style="color:#000000">honki</div>
<div style="color:#000000">hundi</div>
<div style="color:#000000">imhO[77]</div>
<div style="color:#000000">iPat</div>
<div style="color:#000000">jamal</div>
<div style="color:#000000">jib</div>
<div style="color:#000000">k4z</div>
</div></div>

<div id="inputline" class="abs"></div>
<div id="input" class="abs"></div>
<div id="cursor" class="abs"></div>
<svg class="abs" style="left:0;top:963px" width="1280" height="61" viewBox="0 0 1280 61">
<defs>
<linearGradient id="tbg" x1="0" y1="0" x2="0" y2="1"><stop offset="0" stop-color="#8c8e8c"/><stop offset="0.25" stop-color="#888a88"/><stop offset="1" stop-color="#464848"/></linearGradient>
<radialGradient id="orbB" cx="0.5" cy="0.95" r="0.6"><stop offset="0" stop-color="#10e0ff"/><stop offset="0.5" stop-color="#0878b8"/><stop offset="1" stop-color="#0a3a70"/></radialGradient>
<linearGradient id="orbT" x1="0" y1="0" x2="0" y2="1"><stop offset="0" stop-color="#c8d8e8"/><stop offset="1" stop-color="#3878b0"/></linearGradient>
<linearGradient id="btn" x1="0" y1="0" x2="0" y2="1"><stop offset="0" stop-color="#4a4a4a"/><stop offset="0.48" stop-color="#2c2c2c"/><stop offset="0.5" stop-color="#101010"/><stop offset="1" stop-color="#0c0c0c"/></linearGradient>
</defs>
<rect x="0" y="0" width="1280" height="61" fill="#1d1e20"/>
<rect x="0" y="0" width="1280" height="1" fill="#ffffff"/>
<rect x="0" y="1" width="1280" height="1" fill="#4c4c4c"/>
<rect x="0" y="2" width="1280" height="1" fill="#b4b4b4"/>
<rect x="0" y="3" width="1280" height="13" fill="url(#tbg)"/>
<!-- start orb -->
<circle cx="28.5" cy="16.3" r="14" fill="#1a1a1a"/>
<circle cx="28.5" cy="16.3" r="12.8" fill="url(#orbB)" stroke="#8a8078" stroke-width="0.8"/>
<path d="M15.8,16.3 A12.8,12.8 0 0 1 41.2,16.3 Z" fill="url(#orbT)" opacity="0.9"/>
<path d="M22,12.5 Q23,9 27.5,9.5 L27,16 Q23,15.5 21.5,16.5 Z" fill="#e85a20"/>
<path d="M29,10 Q33,11.5 36.5,10.5 L35.5,17.5 Q32,18 28.5,17 Z" fill="#80c030"/>
<path d="M21.5,17.5 Q24,16.5 27,17.5 L26,23.5 Q22,22.5 20,24 Z" fill="#38a0e8"/>
<path d="M28.5,18 Q32,19 35.3,18.8 L34.5,24.5 Q31,25.5 27.5,24.5 Z" fill="#f8c020"/>
<!-- task button -->
<rect x="65.5" y="3" width="157" height="26.5" rx="3" fill="none" stroke="#8a8a8a" stroke-width="1"/>
<rect x="66.5" y="4" width="155" height="24.5" rx="2.5" fill="url(#btn)" stroke="#000" stroke-width="1"/>
<g transform="translate(75,9)"><rect x="2" y="0" width="11" height="7" fill="#0a1090" stroke="#a0a0c0" stroke-width="0.5"/><rect x="4" y="2" width="2" height="5" fill="#fff"/><rect x="9" y="2" width="2" height="5" fill="#fff"/><rect x="0" y="7" width="8" height="9" fill="#f00000"/><rect x="3" y="9" width="1" height="6" fill="#800"/><circle cx="11" cy="12" r="3.3" fill="#f8e800"/><path d="M11,12 L15,10 L15,14Z" fill="#0c0c0c"/></g>
<text x="95.5" y="21" font-family="Liberation Sans" font-size="12.2" fill="#f8fcff">mIRC - [#fick.dich.in...</text>
<g transform="translate(67,38)"><rect x="0.5" y="1.5" width="15" height="12" fill="#c8d0d8" stroke="#a0a8b0"/><rect x="2" y="3" width="12" height="8" fill="#3870c8"/><rect x="2" y="10" width="12" height="2" fill="#303030"/><circle cx="3" cy="12" r="1.5" fill="#e06020"/></g>
<g transform="translate(90,38)"><path d="M13.5,9 L4.5,9 Q5,12.5 8.5,12.5 Q11,12.5 12.5,11 L13,13.5 Q11,15 8.3,15 Q2,15 2,8.5 Q2,2 8.5,2 Q14,2 14,8 Z M4.7,7 L11.3,7 Q11,4.3 8,4.3 Q5,4.3 4.7,7Z" fill="#1888e0" stroke="#0a4a9a" stroke-width="0.5"/><path d="M1.5,14.5 Q-1,12 5,6 Q11,0 14.5,1.5 Q16.5,3 13,7" fill="none" stroke="#f0b828" stroke-width="1.3"/></g>
<g transform="translate(113,38)"><circle cx="8.5" cy="7.5" r="6.5" fill="#3a70c8"/><circle cx="9.5" cy="6.5" r="3" fill="#6aa0e8"/><path d="M1.5,7 Q1,14 8,15 Q14.5,15 15.5,9 Q14,13 9,13 Q4,12.5 4,8 Q3,5 5,3 Q2.5,3.5 1.5,7Z" fill="#f07010"/><path d="M4,3 Q6,0.5 9,1.5 Q6,2 5,4Z" fill="#f8a030"/><path d="M15.5,9 Q16,5 13,3 Q15,6 13.5,9Z" fill="#f89020"/></g>
<g transform="translate(136,38)"><circle cx="8.5" cy="7.5" r="6.5" fill="#2a60b0"/><circle cx="7" cy="5" r="3.5" fill="#80b0e8"/><path d="M3,9 L14,8 L13,13 L4,13Z" fill="#e8e8f0" stroke="#606080" stroke-width="0.5"/><path d="M3,9 L8.5,11.5 L14,8" fill="none" stroke="#8080a0" stroke-width="0.7"/><path d="M9,12 L12,16 L10,12Z" fill="#203060"/></g>
<g transform="translate(159,38)"><rect x="0" y="0" width="16" height="16" fill="#0a1090"/><rect x="2" y="2" width="12" height="2" fill="#fff"/><path d="M3,5 L5,13 L8,8 L11,13 L13,5" stroke="#fff" stroke-width="2" fill="none"/></g>
<g transform="translate(182,38)"><rect x="0.5" y="0.5" width="15" height="15" fill="#fff" stroke="#20a030"/><path d="M3,3 L13,13 M13,3 L3,13" stroke="#208030" stroke-width="2.5"/></g>
<g transform="translate(205,38)"><rect x="0.5" y="0.5" width="15" height="15" fill="#fff" stroke="#e03010"/><circle cx="8" cy="9" r="4" fill="#e04010"/><rect x="8" y="3" width="5" height="5" fill="#fff" stroke="#e04010"/></g>
<g transform="translate(228,38)"><rect x="0" y="0" width="16" height="16" fill="#700830"/><rect x="1" y="1" width="14" height="14" fill="#f8f0f0"/><circle cx="11" cy="5" r="2.5" fill="none" stroke="#700830" stroke-width="1.5"/><path d="M9,7 L3,13" stroke="#700830" stroke-width="2"/></g>
<g transform="translate(251,38)"><rect x="0" y="0" width="16" height="16" fill="#3838d0"/><path d="M4,4 L11,11 M4,4 L8,4 M4,4 L4,8" stroke="#fff" stroke-width="1.8" fill="none"/><path d="M2,2h3M2,2v3M14,2h-3M14,2v3M2,14h3M2,14v-3M14,14h-3M14,14v-3" stroke="#fff" stroke-width="1"/></g>
<g transform="translate(274,38)"><circle cx="8" cy="8" r="7" fill="#6090c0" stroke="#c0c0c0" stroke-width="1.5"/><path d="M3,9 Q8,4 13,8 L13,11 Q8,13 4,11Z" fill="#80b040"/><text x="3" y="10" font-size="5" fill="#fff" font-family="Liberation Sans">irc</text></g>
<g transform="translate(297,38)"><rect x="2" y="0" width="12" height="7" fill="#0a1090"/><rect x="4" y="2" width="2" height="5" fill="#fff"/><rect x="9" y="2" width="2" height="5" fill="#fff"/><rect x="0" y="7" width="9" height="9" fill="#f00000"/><rect x="3" y="9" width="1" height="6" fill="#900"/><circle cx="12" cy="12" r="3.5" fill="#f8e800"/><path d="M12,12 L16,10 L16,14Z" fill="#1c1d20"/></g>
<g transform="translate(320,38)"><path d="M8,0 L10,6 L16,6 L11,10 L13,16 L8,12 L3,16 L5,10 L0,6 L6,6Z" fill="#f8d030" stroke="#a07010" stroke-width="0.5"/></g>
<g transform="translate(343,38)"><rect x="0" y="0" width="16" height="16" fill="#8888b0"/><path d="M3,10 Q3,3 8,3 Q13,3 13,10" stroke="#f0f0f8" stroke-width="1.5" fill="none"/><rect x="2" y="9" width="3" height="5" fill="#f0f0f8"/><rect x="11" y="9" width="3" height="5" fill="#f0f0f8"/></g>
<g transform="translate(366,38)"><circle cx="8" cy="9" r="6.5" fill="#808080"/><circle cx="8" cy="9" r="3" fill="#c08040"/><path d="M4,1 L7,4 M12,1 L9,4" stroke="#a0a0a0"/></g>
<g transform="translate(389,38)"><path d="M4,2 L12,2 L14,6 L10,10 L12,14 L4,12 L6,8 L2,6Z" fill="#e0e0e8" stroke="#606070" stroke-width="0.8"/></g>
<g transform="translate(412,38)"><circle cx="8" cy="8" r="7.5" fill="#f0e0e0"/><circle cx="8" cy="8" r="6" fill="#a01818"/><path d="M4,11 Q8,2 12,11Z" fill="#f0a020"/></g>
<g transform="translate(435,38)"><rect x="0" y="0" width="16" height="16" fill="#f4f4f4"/><circle cx="7" cy="9" r="4" fill="#f00000"/><circle cx="12" cy="5" r="1.5" fill="#f00000"/><circle cx="3" cy="4" r="1.5" fill="#f00000"/><circle cx="11" cy="13" r="1.5" fill="#f00000"/></g>
<g transform="translate(458,38)"><path d="M8,0 L16,8 L8,16 L0,8Z" fill="#303030" stroke="#e0e0e0" stroke-width="0.8"/><path d="M11,3 L5,9 L8,9 L5,13 L11,7 L8,7Z" fill="#f09820"/></g>
<g transform="translate(481,38)"><rect x="0.5" y="0.5" width="15" height="15" fill="#80c090" stroke="#1878e8" stroke-width="1.5"/><circle cx="8" cy="8" r="5.5" fill="#f08010"/><path d="M6,5 L11,8 L6,11Z" fill="#fff"/></g>
<g transform="translate(504,38)"><path d="M8,1 L15,15 L1,15Z" fill="#f0f000" stroke="#000080" stroke-width="1"/><circle cx="8" cy="10" r="2.5" fill="#202020"/></g>
<g transform="translate(527,38)"><rect x="0" y="0" width="16" height="16" fill="#f4f4f4"/><text x="4" y="7" font-size="6" font-family="Liberation Sans" fill="#202020">SP</text><text x="1" y="14" font-size="6" font-family="Liberation Sans" font-weight="bold" fill="#202020">Map</text></g>
<g transform="translate(550,38)"><ellipse cx="9" cy="6" rx="7" ry="5" fill="#e8e8f8"/><circle cx="9" cy="6" r="2" fill="#3050c0"/><rect x="0" y="11" width="16" height="5" fill="#40c0e0"/><rect x="0" y="11" width="16" height="1" fill="#800040"/></g>
<g transform="translate(573,38)"><path d="M2,10 Q2,1 8,1 Q14,1 14,10" stroke="#1020c0" stroke-width="1.5" fill="none"/><path d="M3,8 L13,8 L12,13 L4,13Z" fill="#f0c020"/><path d="M4,9 L12,12" stroke="#f02020" stroke-width="2"/></g>
<g transform="translate(596,38)"><rect x="0" y="0" width="8" height="8" fill="#e0e0e0"/><rect x="8" y="0" width="8" height="8" fill="#20c040"/><rect x="0" y="8" width="8" height="8" fill="#20d0d0"/><rect x="8" y="8" width="8" height="8" fill="#f0f000"/><rect x="2" y="10" width="4" height="4" fill="#f02020"/><rect x="2" y="2" width="4" height="4" fill="#2030a0"/></g>
<g transform="translate(619,38)"><path d="M1,3 L12,1 L15,3 L15,13 L12,16 L1,13Z" fill="#e08010"/><path d="M1,3 L12,1 L15,3 L4,5Z" fill="#f8c060"/></g>
<g transform="translate(642,38)"><rect x="0.5" y="0.5" width="15" height="15" fill="#000" stroke="#20c0f0" stroke-width="1"/><path d="M2,2 L14,2 M8,2 L8,14" stroke="#20d0f8" stroke-width="2"/><rect x="2" y="8" width="6" height="6" fill="#f0f0f0"/><path d="M6,10 L13,14" stroke="#f0b020" stroke-width="2"/></g>
<g transform="translate(665,38)"><rect x="6" y="1" width="9" height="7" fill="#3060c0" stroke="#e0e0e0" stroke-width="0.8"/><rect x="2" y="5" width="9" height="7" fill="#3878d8" stroke="#e0e0e0" stroke-width="0.8"/><rect x="0" y="13" width="16" height="3" fill="#c0e8c0"/><rect x="7" y="11" width="2" height="3" fill="#20a040"/><circle cx="3" cy="3" r="2.5" fill="#30a0e0"/></g>
<g transform="translate(688,38)"><text x="0" y="11" font-size="7.5" font-family="Liberation Sans" font-weight="bold" fill="#080808">Chat</text></g>
<g transform="translate(711,38)"><circle cx="8" cy="7" r="3.5" fill="#6030b0"/><path d="M1,2 L5,6 M15,2 L11,6 M1,14 L5,9 M15,14 L11,9 M0,8h4M12,8h4" stroke="#6030b0" stroke-width="1"/><rect x="10" y="3" width="6" height="11" fill="#f0e0e0"/></g>
<g transform="translate(734,38)"><rect x="4" y="3" width="12" height="13" fill="#d09090"/><rect x="0.5" y="0.5" width="12" height="13" fill="#f0f0f0" stroke="#b0b0b0" stroke-width="0.8"/><path d="M6.5,4 L9,7 L6.5,10 L4,7Z" fill="#303030"/></g>
<g transform="translate(757,38)"><rect x="1" y="0" width="14" height="3" fill="#e0a000"/><path d="M1,5 L15,5 L14,14 L2,14Z" fill="#f0c020"/><path d="M3,6 L11,6 L10,11 L4,11Z" fill="#f0f0f0"/></g>
<g transform="translate(780,38)"><rect x="1" y="1" width="14" height="14" fill="#d0e0f0" stroke="#e02030" stroke-width="1"/><path d="M3,13 Q7,3 8,1 Q10,8 15,10 Q8,10 3,13Z" fill="none" stroke="#e02030" stroke-width="1"/></g>
<g transform="translate(803,38)"><path d="M2,8 Q3,1 8,2 Q14,1 14,8 Q15,14 8,14 Q1,14 2,8Z" fill="#c89868"/><circle cx="6" cy="6" r="1" fill="#202020"/><circle cx="10" cy="6" r="1" fill="#202020"/></g>
<g transform="translate(826,38)"><rect x="0" y="0" width="16" height="16" fill="#b02020"/><rect x="0" y="0" width="8" height="16" fill="#0a0ad0"/><text x="1" y="13" font-size="12" font-family="Liberation Sans" font-weight="bold" fill="#f8e000">Fz</text></g>
<g transform="translate(849,38)"><circle cx="8" cy="8" r="7.5" fill="#5878a8"/><circle cx="8" cy="8" r="6" fill="#7090c0"/><path d="M4,12 Q8,12 9,7 Q10,4 12,4" stroke="#fff" stroke-width="1.6" fill="none"/><path d="M6,8 L11,8" stroke="#fff" stroke-width="1.2"/></g>
<!-- tray -->
<g transform="translate(1165,5)"><rect x="4" y="0" width="10" height="8" fill="#38a0f0" stroke="#fff" stroke-width="1"/><rect x="0.5" y="4" width="10" height="8" fill="#38a0f0" stroke="#fff" stroke-width="1"/><rect x="3" y="13" width="5" height="2" fill="#fff"/></g>
<g transform="translate(1183,5)"><defs><linearGradient id="ircg" x1="0" y1="0" x2="1" y2="1"><stop offset="0" stop-color="#281808"/><stop offset="0.6" stop-color="#806020"/><stop offset="1" stop-color="#f0a020"/></linearGradient></defs><rect x="0.5" y="0.5" width="15" height="15" fill="url(#ircg)" stroke="#e09020" stroke-width="1"/><text x="1.5" y="11.5" font-family="Liberation Sans" font-weight="bold" font-size="9" fill="#f8f8f8">irc</text></g>
<path d="M1157,26 L1152,30 L1157,34" stroke="#d8d8e0" stroke-width="2" fill="none"/>
<g transform="translate(1165,23)"><path d="M8,0 L16,8 L8,16 L0,8Z" fill="#303030" stroke="#e0e0e0" stroke-width="0.8"/><path d="M11,3 L5,9 L8,9 L5,13 L11,7 L8,7Z" fill="#f09820"/></g>
<g transform="translate(1183,23)"><rect x="0" y="0" width="16" height="16" fill="#e01020"/><path d="M4,13 Q5,3 9,3 Q12,4 12,10 Q13,13 15,12" stroke="#fff" stroke-width="1.8" fill="none"/></g>
<g transform="translate(1165,41)"><rect x="4" y="0" width="10" height="8" fill="#1860b8" stroke="#fff" stroke-width="1"/><rect x="0.5" y="4" width="10" height="8" fill="#1860b8" stroke="#fff" stroke-width="1"/><rect x="3" y="13" width="5" height="2" fill="#fff"/></g>
<text x="1222.5" y="24" font-family="Liberation Sans" font-size="12" fill="#e8f4ff">22:58</text>
<text x="1215" y="46" font-family="Liberation Sans" font-size="12.5" fill="#e8f4ff">Montag</text>
</svg>
</body></html>
